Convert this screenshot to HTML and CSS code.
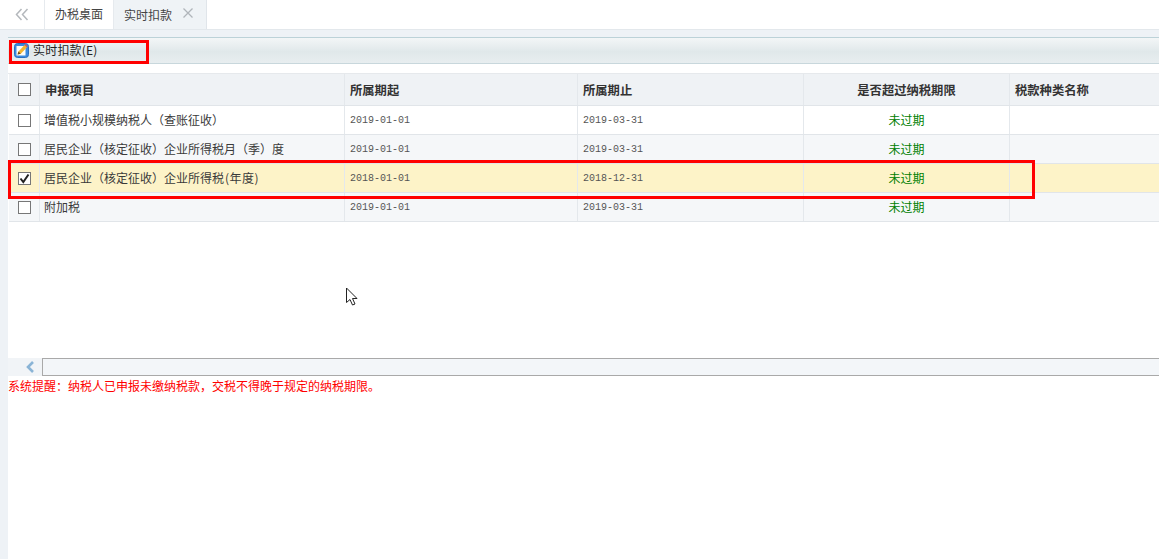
FILE: index.html
```html
<!DOCTYPE html>
<html lang="zh-CN">
<head>
  <meta charset="UTF-8">
  <title>实时扣款</title>
  <link rel="stylesheet" href="styles.css">
</head>
<body>
  <div class="tabbar">
    <div class="tab-toggle">
      <svg width="14" height="13" viewBox="0 0 14 13"><path d="M6.500 1 1.500 6.500l5 5.500M12.500 1l-5 5.500 5 5.500" fill="none" stroke="#b4b8bc" stroke-width="1.500"/></svg>
    </div>
    <div class="tab">办税桌面</div>
    <div class="tab tab-active">
      实时扣款
      <svg class="tab-close" width="10" height="10" viewBox="0 0 10 10"><path d="M.5.500l9 9M9.500.500l-9 9" fill="none" stroke="#b0b5ba" stroke-width="1.300"/></svg>
    </div>
  </div>

  <div class="main">
    <div class="content">
      <div class="toolbar">
        <button class="tool-button" type="button">
          <svg width="15" height="15" viewBox="0 0 15 15">
            <rect x="0.500" y="0.500" width="14" height="14" rx="3" fill="#3a8ae0" stroke="#2a6fc0"/>
            <rect x="2.500" y="3" width="9" height="9.500" fill="#fdfdf8"/>
            <path d="M3.500 11.500 4.500 8.500 10.500 2 13 4.300 6.800 10.700z" fill="#f4b630"/>
            <path d="M3.500 11.500 4.500 8.500 6.800 10.700z" fill="#6b4a20"/>
            <path d="M10.500 2 11.500 1 13.800 3.300 13 4.300z" fill="#e0584a"/>
          </svg>
          <span class="tool-label">实时扣款(E)</span>
        </button>
      </div>

      <div class="grid">
        <div class="grid-row grid-head">
          <div class="cell cell-check"><span class="check"></span></div>
          <div class="cell cell-name">申报项目</div>
          <div class="cell cell-date">所属期起</div>
          <div class="cell cell-date2">所属期止</div>
          <div class="cell cell-status">是否超过纳税期限</div>
          <div class="cell cell-kind">税款种类名称</div>
        </div>
        <div class="grid-row">
          <div class="cell cell-check"><span class="check"></span></div>
          <div class="cell cell-name">增值税小规模纳税人（查账征收）</div>
          <div class="cell cell-date">2019-01-01</div>
          <div class="cell cell-date2">2019-03-31</div>
          <div class="cell cell-status">未过期</div>
          <div class="cell cell-kind"></div>
        </div>
        <div class="grid-row row-alt">
          <div class="cell cell-check"><span class="check"></span></div>
          <div class="cell cell-name">居民企业（核定征收）企业所得税月（季）度</div>
          <div class="cell cell-date">2019-01-01</div>
          <div class="cell cell-date2">2019-03-31</div>
          <div class="cell cell-status">未过期</div>
          <div class="cell cell-kind"></div>
        </div>
        <div class="grid-row row-selected">
          <div class="cell cell-check">
            <span class="check">
              <svg width="11" height="11" viewBox="0 0 11 11"><path d="M1.500 5.500 4.300 9 9.500 1.500" fill="none" stroke="#222" stroke-width="2"/></svg>
            </span>
          </div>
          <div class="cell cell-name">居民企业（核定征收）企业所得税<span class="year">(年度)</span></div>
          <div class="cell cell-date">2018-01-01</div>
          <div class="cell cell-date2">2018-12-31</div>
          <div class="cell cell-status">未过期</div>
          <div class="cell cell-kind"></div>
        </div>
        <div class="grid-row row-alt">
          <div class="cell cell-check"><span class="check"></span></div>
          <div class="cell cell-name">附加税</div>
          <div class="cell cell-date">2019-01-01</div>
          <div class="cell cell-date2">2019-03-31</div>
          <div class="cell cell-status">未过期</div>
          <div class="cell cell-kind"></div>
        </div>
      </div>

      <div class="scroll-bar">
        <div class="scroll-left">
          <svg width="12" height="14" viewBox="0 0 12 14"><path d="M9 2 4 7l5 5" fill="none" stroke="#8ab4d6" stroke-width="2.600"/></svg>
        </div>
        <div class="scroll-thumb"></div>
      </div>

      <p class="notice">系统提醒：纳税人已申报未缴纳税款，交税不得晚于规定的纳税期限。</p>
    </div>
  </div>

  <div class="mark mark-tool"></div>
  <div class="mark mark-row"></div>

  <svg class="cursor" width="14" height="20" viewBox="0 0 14 20"><path d="M1.500 1v14.500l3.500-3 2.500 5.500 2.500-1-2.500-5.500h4.500z" fill="#fff" stroke="#222" stroke-width="1"/></svg>
</body>
</html>
```

FILE: styles.css
```css
html, body {
  height: 100%;
}

body {
  margin: 0;
  overflow: hidden;
  background: #ffffff;
  font-family: "Noto Sans CJK SC", "Liberation Sans", sans-serif;
  font-size: 12px;
  color: #333333;
}

.tabbar {
  display: flex;
  height: 30px;
  box-sizing: border-box;
  border-bottom: 1px solid #e3e8ec;
}

.tab-toggle {
  width: 44px;
  display: flex;
  align-items: center;
  justify-content: center;
}

.tab {
  width: 69px;
  box-sizing: border-box;
  padding-left: 10px;
  line-height: 28px;
  color: #444444;
  border-left: 1px solid #e6eaee;
}

.tab-active {
  width: 94px;
  display: flex;
  align-items: center;
  background: #eff3f6;
  border-right: 1px solid #e0e5ea;
}

.tab-close {
  margin: -3px 0 0 11px;
}

.main {
  height: 529px;
  box-sizing: border-box;
  padding: 7px 0 0 8px;
  background: #eef2f6;
}

.content {
  height: 100%;
  background: #ffffff;
}

.toolbar {
  height: 27px;
  box-sizing: border-box;
  border-top: 1px solid #bcd2d8;
  border-bottom: 1px solid #c8d7dc;
  background: linear-gradient(#f3f6f7, #e0e8ea 55%, #e8eef0);
  display: flex;
  align-items: center;
}

.tool-button {
  display: flex;
  align-items: center;
  gap: 4px;
  margin-left: 6px;
  margin-top: -1px;
  padding: 0;
  border: 0;
  background: none;
  font: inherit;
  color: #222222;
}

.tool-label {
  letter-spacing: 0.2px;
  position: relative;
  top: -1px;
}

.grid {
  margin-top: 9px;
  padding-left: 1px;
  border-top: 1px solid #e6e9ec;
  height: 284px;
}

.grid-row {
  display: flex;
  height: 29px;
  border-bottom: 1px solid #e1e5e9;
  box-sizing: border-box;
}

.grid-head {
  height: 32px;
  background: #eff2f5;
  font-weight: 700;
  font-size: 12.300px;
  color: #333333;
}

.row-alt {
  background: #f5f7f9;
}

.row-selected {
  background: #fdf3c8;
}

.cell {
  box-sizing: border-box;
  display: flex;
  align-items: center;
  padding-left: 5px;
  border-right: 1px solid #e4e8ec;
  flex: none;
}

.cell-check {
  width: 31px;
  padding-left: 9px;
}

.cell-name {
  width: 305px;
  padding-left: 4px;
  padding-bottom: 1px;
  color: #3a3a3a;
}

.grid-head .cell-name {
  padding-left: 5px;
  padding-bottom: 0;
  color: #333333;
}

.year {
  letter-spacing: 0.500px;
  margin-left: 1px;
}

.cell-date {
  width: 233px;
}

.cell-date2 {
  width: 226px;
}

.cell-status {
  width: 206px;
  justify-content: center;
  padding-left: 0;
}

.cell-kind {
  width: 150px;
  border-right: 0;
}

.grid-row:not(.grid-head) .cell-date,
.grid-row:not(.grid-head) .cell-date2 {
  font-family: "Liberation Mono", monospace;
  font-size: 10px;
  color: #555555;
}

.grid-row:not(.grid-head) .cell-status {
  padding-bottom: 1px;
  color: #008000;
}

.check {
  width: 11px;
  height: 11px;
  border: 1px solid #777777;
  background: #ffffff;
  display: flex;
  flex: none;
}

.scroll-bar {
  display: flex;
  height: 18px;
  background: #f1f4f7;
}

.scroll-left {
  width: 34px;
  display: flex;
  align-items: center;
  justify-content: flex-start;
  padding-left: 16px;
  box-sizing: border-box;
}

.scroll-thumb {
  flex: 1;
  border: 1px solid #a9a9a9;
  border-right: 0;
  background: #f3f6f9;
}

.notice {
  margin: 2px 0 0 0;
  color: #ff0000;
  font-size: 12px;
  line-height: 16px;
}

.mark {
  position: absolute;
  box-sizing: border-box;
  border: 3px solid #ff0000;
}

.mark-tool {
  left: 9px;
  top: 40px;
  width: 140px;
  height: 24px;
}

.mark-row {
  left: 8px;
  top: 160px;
  width: 1027px;
  height: 39px;
}

.cursor {
  position: absolute;
  left: 345px;
  top: 287px;
}
```
